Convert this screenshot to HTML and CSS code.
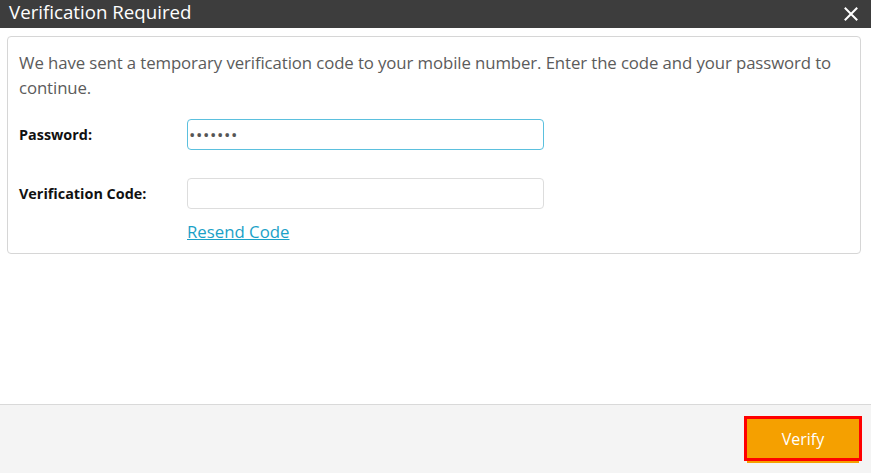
FILE: index.html
```html
<!DOCTYPE html>
<html>
<head>
<meta charset="utf-8">
<link rel="stylesheet" href="styles.css">
</head>
<body>
<div class="dialog">
  <div class="titlebar">
    <span class="title">Verification Required</span>
    <span class="close">
      <svg width="14" height="14" viewBox="0 0 14 14"><path d="M1.5 1.5 L12.5 12.5 M12.5 1.5 L1.5 12.5" stroke="#fff" stroke-width="2" stroke-linecap="square"/></svg>
    </span>
  </div>
  <div class="content">
    <div class="panel">
      <p class="intro">We have sent a temporary verification code to your mobile number. Enter the code and your password to continue.</p>
      <div class="row">
        <label class="label">Password:</label>
        <div class="input focused">•••••••</div>
      </div>
      <div class="row row2">
        <label class="label">Verification Code:</label>
        <div class="input"></div>
      </div>
      <div class="linkrow"><a class="link" href="#">Resend Code</a></div>
    </div>
  </div>
  <div class="footer">
    <button class="verify">Verify</button>
  </div>
</div>
</body>
</html>
```
FILE: styles.css
```css
html, body {
  margin: 0;
  padding: 0;
  background: #fff;
}
.dialog {
  width: 871px;
  height: 473px;
  display: flex;
  flex-direction: column;
  font-family: "Open Sans", "Noto Sans", sans-serif;
}
.titlebar {
  height: 28px;
  background: #3d3d3d;
  display: flex;
  align-items: center;
  justify-content: space-between;
  padding: 0 13px 0 9px;
  box-sizing: border-box;
  flex: none;
}
.title {
  color: #fff;
  font-size: 18.7px;
  line-height: 1;
  margin-top: -3px;
}
.close {
  display: flex;
  width: 14px;
  height: 14px;
}
.content {
  flex: 1;
  padding: 8px 10px 0 7px;
}
.panel {
  border: 1px solid #d6d6d6;
  border-radius: 4px;
  height: 218px;
  box-sizing: border-box;
  padding: 13px 11px 0 11px;
}
.intro {
  margin: 0;
  font-size: 16.8px;
  line-height: 25px;
  color: #5b5b5b;
  letter-spacing: -0.1px;
}
.row {
  display: flex;
  align-items: center;
  margin-top: 19px;
}
.row2 {
  margin-top: 28px;
}
.label {
  width: 168px;
  font-size: 14.4px;
  font-weight: 700;
  color: #111;
}
.input {
  width: 357px;
  height: 31px;
  box-sizing: border-box;
  border: 1px solid #ddd;
  border-radius: 4px;
  font-size: 17px;
  color: #555;
  display: flex;
  align-items: center;
  padding-left: 1px;
  letter-spacing: 0.6px;
}
.input.focused {
  border-color: #5bc0de;
}
.linkrow {
  margin-top: 11px;
  padding-left: 168px;
}
.link {
  color: #1ba1c7;
  font-size: 16.8px;
  text-decoration: underline;
}
.footer {
  height: 69px;
  flex: none;
  background: #f4f4f4;
  border-top: 1px solid #d9d9d9;
  box-sizing: border-box;
  display: flex;
  justify-content: flex-end;
  align-items: flex-start;
  padding: 11px 9px 0 0;
}
.verify {
  width: 118px;
  height: 45px;
  background: #f5a000;
  border: 3px solid #ff0000;
  color: #fff;
  font-family: "Open Sans", "Noto Sans", sans-serif;
  font-size: 16px;
  padding: 0;
  box-shadow: 0 5px 0 -3px #f5a000;
}
```
